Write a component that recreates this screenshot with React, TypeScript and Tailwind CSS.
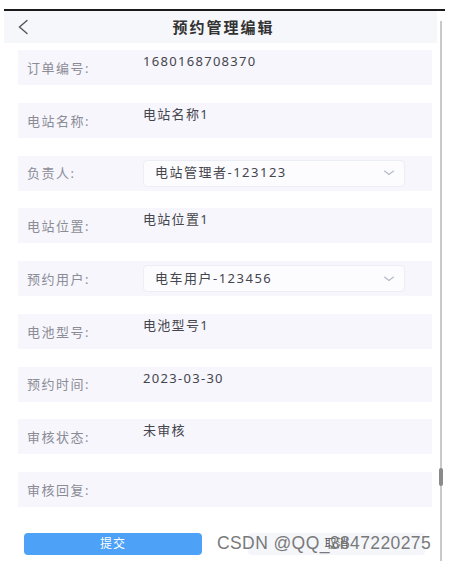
import React from "react";

type Field = {
  label: string;
  value: string;
  select?: boolean;
};

const fields: Field[] = [
  { label: "订单编号:", value: "1680168708370" },
  { label: "电站名称:", value: "电站名称1" },
  { label: "负责人:", value: "电站管理者-123123", select: true },
  { label: "电站位置:", value: "电站位置1" },
  { label: "预约用户:", value: "电车用户-123456", select: true },
  { label: "电池型号:", value: "电池型号1" },
  { label: "预约时间:", value: "2023-03-30" },
  { label: "审核状态:", value: "未审核" },
  { label: "审核回复:", value: "" },
];

const Chevron = () => (
  <svg width="12" height="8" viewBox="0 0 12 8" fill="none">
    <path d="M1.5 2l4.5 3.5L10.5 2" stroke="#b4b8c4" strokeWidth="1.1" strokeLinecap="round" />
  </svg>
);

const FormRow: React.FC<{ field: Field }> = ({ field }) => {
  return (
    <div className="h-[35px] flex bg-[#f6f6fc]">
      <div className="w-[125px] pl-[9px] flex items-center pt-[2px] text-[13px] tracking-[1.5px] text-[#8c8c96]">
        {field.label}
      </div>
      {field.select ? (
        <div className="flex items-center">
          <div className="w-[262px] h-[27px] bg-[#fcfcff] border border-[#eceef6] rounded-[4px] flex items-center justify-between pl-[11px] pr-[9px] text-[13px] text-[#45454d] tracking-[1.5px]">
            <span>{field.value}</span>
            <Chevron />
          </div>
        </div>
      ) : (
        <div className="pt-[2px] text-[13px] leading-[18px] text-[#45454d] tracking-[1.3px]">{field.value}</div>
      )}
    </div>
  );
};

export default function App() {
  return (
    <div
      className="w-[449px] h-[565px] bg-white relative overflow-hidden"
      style={{ fontFamily: '"Noto Sans", "Noto Sans CJK SC", sans-serif' }}
    >
      <div className="pt-[9px] px-[4px]">
        <div className="h-[2px] bg-[#1a1a1a]" />
        <div className="flex">
          <div className="flex-1">
            <div className="h-[32px] bg-[#f6f7fb] relative flex items-center justify-center">
              <svg className="absolute left-[13px] top-[8px]" width="12" height="16" viewBox="0 0 12 16" fill="none">
                <path d="M10 1.5L2.5 8l7.5 6.5" stroke="#555" strokeWidth="1.4" strokeLinecap="round" />
              </svg>
              <span className="text-[15px] font-bold text-[#333] tracking-[2px] pl-[6px]">预约管理编辑</span>
            </div>
            <div className="pl-[14px] pr-[5px] pt-[7px] flex flex-col gap-[17.75px]">
              {fields.map((f) => (
                <FormRow key={f.label} field={f} />
              ))}
            </div>
            <div className="flex pl-[20px] pt-[26px] gap-[46px]">
              <button className="w-[178px] h-[22px] rounded-[4px] bg-[#4da1f7] text-white text-[12px] tracking-[1px]">
                提交
              </button>
              <button className="w-[177px] h-[22px] rounded-[4px] bg-[#f5f6fa] text-[#555] text-[12px]">
                取消
              </button>
            </div>
          </div>
          <div className="w-[8px] flex justify-center pt-[10px]">
            <div className="w-[2px] h-[540px] bg-[#c9c9c9] relative">
              <div className="absolute left-[-1px] top-[447px] w-[4px] h-[18px] rounded-full bg-[#8a8a8a]" />
            </div>
          </div>
        </div>
      </div>
      <div
        className="absolute left-[217px] top-[532px] text-[17.5px] leading-[22px] tracking-[0.4px] text-[#7a7a7a] pointer-events-none"
        style={{ fontFamily: '"Liberation Sans", sans-serif' }}
      >
        CSDN @QQ_3847220275
      </div>
    </div>
  );
}
